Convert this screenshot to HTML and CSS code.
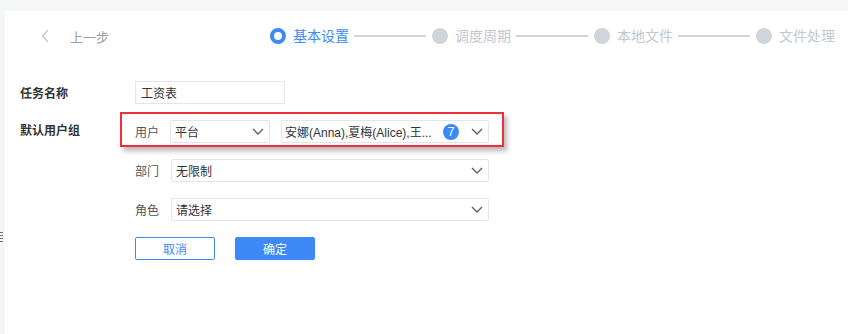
FILE: index.html
```html
<!DOCTYPE html>
<html lang="zh-CN">
<head>
    <meta charset="UTF-8">
    <meta name="viewport" content="width=device-width, initial-scale=1.0">
    <title>任务设置</title>
    <link rel="stylesheet" href="styles.css">
</head>
<body>
    <div class="drag-handle"></div>
    <div class="panel">
        <div class="header">
            <a class="back" href="#">
                <svg width="8" height="14" viewBox="0 0 8 14"><path d="M7 1 L1.5 7 L7 13" fill="none" stroke="#c6c9d0" stroke-width="1.4"/></svg>
                <span>上一步</span>
            </a>
            <ol class="steps">
                <li class="step active"><span class="dot"></span><span class="step-name">基本设置</span></li>
                <li class="step-line"></li>
                <li class="step"><span class="dot"></span><span class="step-name">调度周期</span></li>
                <li class="step-line"></li>
                <li class="step"><span class="dot"></span><span class="step-name">本地文件</span></li>
                <li class="step-line"></li>
                <li class="step"><span class="dot"></span><span class="step-name">文件处理</span></li>
            </ol>
        </div>

        <form class="form">
            <div class="row">
                <label class="label">任务名称</label>
                <input class="text-input" type="text" value="工资表">
            </div>

            <div class="row row-user">
                <label class="label label-narrow">默认用户组</label>
                <div class="highlight">
                    <span class="sub-label">用户</span>
                    <div class="select select-type">
                        <span class="select-text">平台</span>
                        <svg class="chevron" width="12" height="7" viewBox="0 0 12 7"><path d="M1 1 L6 6 L11 1" fill="none" stroke="#5a5e66" stroke-width="1.3"/></svg>
                    </div>
                    <div class="select select-users">
                        <span class="select-text">安娜(Anna),夏梅(Alice),王...</span>
                        <span class="badge">7</span>
                        <svg class="chevron" width="12" height="7" viewBox="0 0 12 7"><path d="M1 1 L6 6 L11 1" fill="none" stroke="#5a5e66" stroke-width="1.3"/></svg>
                    </div>
                </div>
            </div>

            <div class="row row-sub">
                <span class="sub-label">部门</span>
                <div class="select select-wide">
                    <span class="select-text">无限制</span>
                    <svg class="chevron" width="12" height="7" viewBox="0 0 12 7"><path d="M1 1 L6 6 L11 1" fill="none" stroke="#5a5e66" stroke-width="1.3"/></svg>
                </div>
            </div>

            <div class="row row-sub">
                <span class="sub-label">角色</span>
                <div class="select select-wide">
                    <span class="select-text">请选择</span>
                    <svg class="chevron" width="12" height="7" viewBox="0 0 12 7"><path d="M1 1 L6 6 L11 1" fill="none" stroke="#5a5e66" stroke-width="1.3"/></svg>
                </div>
            </div>

            <div class="actions">
                <button type="button" class="btn btn-cancel">取消</button>
                <button type="button" class="btn btn-ok">确定</button>
            </div>
        </form>
    </div>
</body>
</html>
```

FILE: styles.css
```css
* {
    box-sizing: border-box;
    margin: 0;
    padding: 0;
}
body {
    font-family: 'Liberation Sans', 'Noto Sans CJK SC', sans-serif;
    font-size: 12px;
    color: #333;
    background-color: #f5f6f8;
    height: 100vh;
    padding: 11px 0 0 5px;
    overflow: hidden;
}
.panel {
    background-color: #fff;
    height: 100%;
}
.drag-handle {
    position: absolute;
    left: 0;
    top: 232px;
    width: 3px;
    height: 12px;
    background: repeating-linear-gradient(to bottom, #6a6f78 0, #6a6f78 1px, transparent 1px, transparent 3px);
}
.header {
    display: flex;
    align-items: center;
    height: 50px;
    padding: 0 13px 0 36px;
}
.back {
    display: flex;
    align-items: center;
    gap: 21px;
    color: #9a9da3;
    font-size: 13px;
    text-decoration: none;
}
.steps {
    display: flex;
    align-items: center;
    list-style: none;
    margin-left: auto;
}
.step {
    display: flex;
    align-items: center;
    gap: 7px;
    color: #c3c7ce;
    font-size: 14px;
    line-height: 16px;
}
.dot {
    width: 16px;
    height: 16px;
    border-radius: 50%;
    background-color: #d0d4db;
}
.step.active {
    color: #3d8af7;
}
.step.active .dot {
    background-color: #fff;
    border: 4px solid #3d8af7;
}
.step-line {
    width: 72px;
    height: 2px;
    margin: 0 6px 0 5px;
    background-color: #d0d3da;
}
.form {
    margin-top: 20px;
    padding-left: 15px;
}
.row {
    display: flex;
    align-items: center;
}
.label {
    width: 115px;
    font-weight: bold;
    color: #333;
}
.label-narrow {
    width: 100px;
}
.text-input {
    width: 150px;
    height: 23px;
    border: 1px solid #e3e5e9;
    padding: 0 5px;
    font-family: inherit;
    font-size: 12px;
    color: #333;
    outline: none;
}
.row-user {
    margin-top: 8px;
}
.highlight {
    display: flex;
    align-items: center;
    border: 2px solid #ee2f3a;
    padding: 6px 13px 2px;
    box-shadow: 3px 4px 5px rgba(0, 0, 0, 0.28);
}
.sub-label {
    width: 35px;
    color: #555;
}
.select {
    display: flex;
    align-items: center;
    height: 23px;
    border: 1px solid #e3e5e9;
    border-radius: 2px;
    padding: 0 5px 0 4px;
    background-color: #fff;
}
.select-text {
    flex-grow: 1;
    white-space: nowrap;
    overflow: hidden;
}
.select-type {
    width: 100px;
}
.select-users {
    width: 208px;
    margin-left: 11px;
    padding-left: 3px;
}
.badge {
    width: 16px;
    height: 16px;
    border-radius: 50%;
    background-color: #3d8af7;
    color: #fff;
    font-size: 12px;
    line-height: 16px;
    text-align: center;
    margin-right: 12px;
}
.row-sub {
    margin-left: 115px;
}
.row-sub .sub-label {
    width: 36px;
}
.row-user + .row-sub {
    margin-top: 12px;
}
.row-sub + .row-sub {
    margin-top: 16px;
}
.select-wide {
    width: 318px;
}
.actions {
    display: flex;
    gap: 20px;
    margin: 16px 0 0 115px;
}
.btn {
    width: 80px;
    height: 23px;
    border-radius: 2px;
    font-family: inherit;
    font-size: 12px;
    cursor: pointer;
}
.btn-cancel {
    background-color: #fff;
    border: 1px solid #3d8af7;
    color: #3d8af7;
}
.btn-ok {
    background-color: #3d8af7;
    border: 1px solid #3d8af7;
    color: #fff;
}
```
